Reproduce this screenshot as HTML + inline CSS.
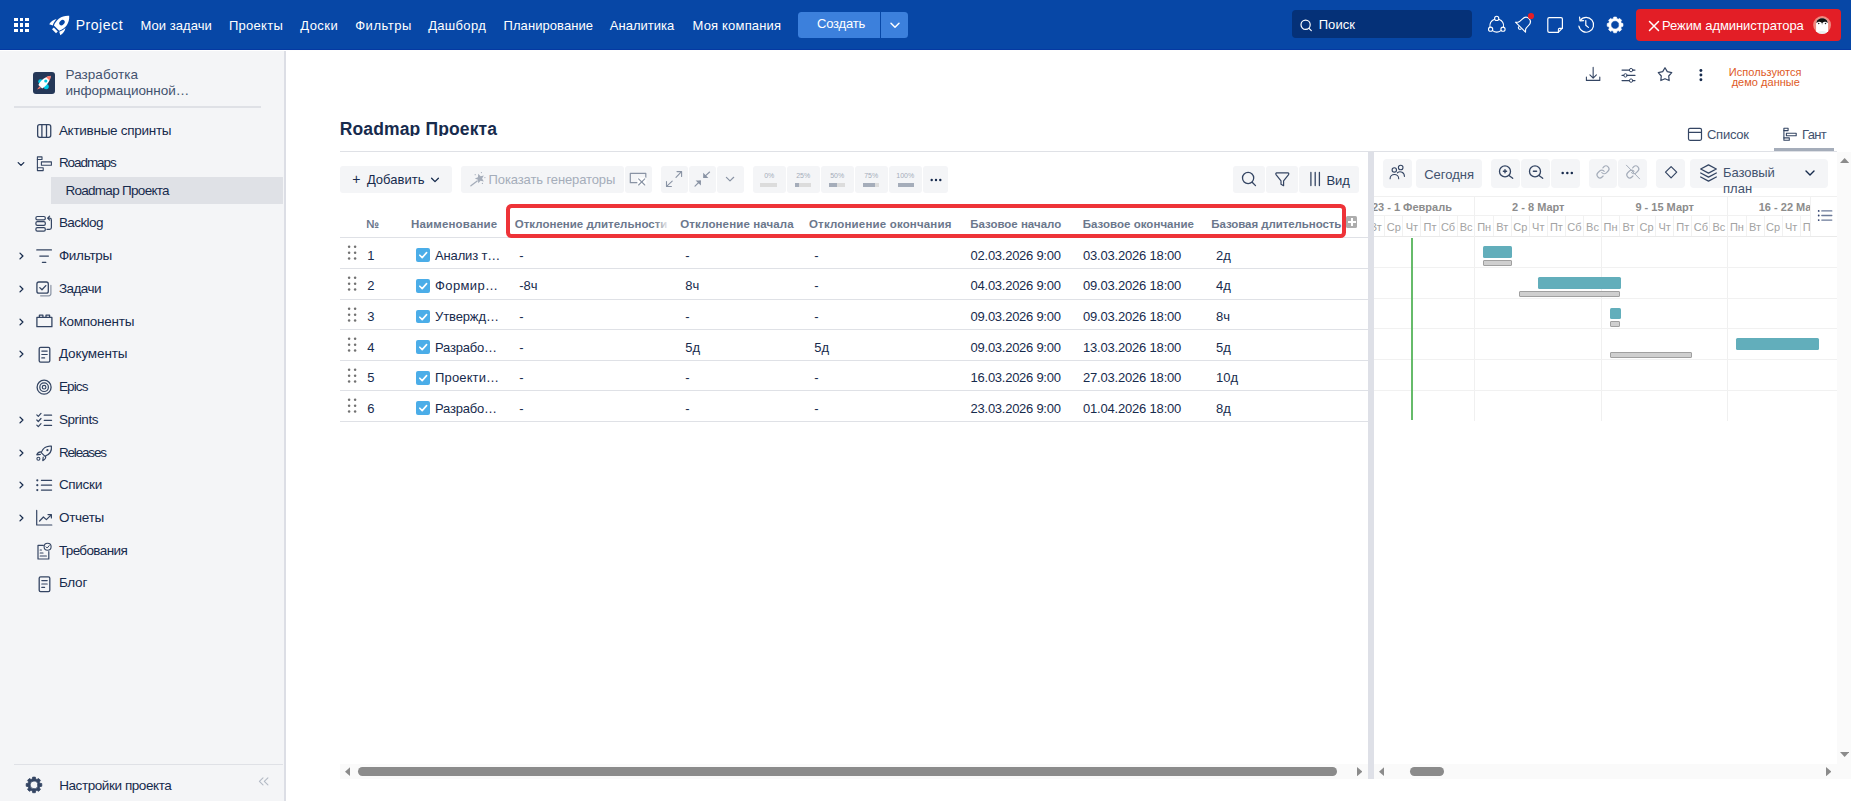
<!DOCTYPE html>
<html lang="ru"><head><meta charset="utf-8"><title>Roadmap Проекта</title>
<style>
html,body{margin:0;padding:0}
body{width:1851px;height:801px;position:relative;overflow:hidden;background:#fff;font-family:'Liberation Sans', sans-serif}
header,aside,section,main{display:block;position:static}
</style></head><body>
<header aria-label="Верхняя панель">
<div style="position:absolute;left:0px;top:0px;width:1851px;height:50px;background:#0747A6;"></div>
<div style="position:absolute;left:0px;top:49px;width:1851px;height:1px;background:#0539A2;"></div>
<div style="position:absolute;left:14px;top:17.8px;width:3.5px;height:3.5px;background:#fff;"></div>
<div style="position:absolute;left:19.5px;top:17.8px;width:3.5px;height:3.5px;background:#fff;"></div>
<div style="position:absolute;left:25px;top:17.8px;width:3.5px;height:3.5px;background:#fff;"></div>
<div style="position:absolute;left:14px;top:23.25px;width:3.5px;height:3.5px;background:#fff;"></div>
<div style="position:absolute;left:19.5px;top:23.25px;width:3.5px;height:3.5px;background:#fff;"></div>
<div style="position:absolute;left:25px;top:23.25px;width:3.5px;height:3.5px;background:#fff;"></div>
<div style="position:absolute;left:14px;top:28.7px;width:3.5px;height:3.5px;background:#fff;"></div>
<div style="position:absolute;left:19.5px;top:28.7px;width:3.5px;height:3.5px;background:#fff;"></div>
<div style="position:absolute;left:25px;top:28.7px;width:3.5px;height:3.5px;background:#fff;"></div>
<div style="position:absolute;left:797.9px;top:11.9px;width:82px;height:26.2px;background:#3C80DC;border-radius:3.5px 0 0 3.5px"></div>
<div style="position:absolute;left:881.1px;top:11.9px;width:27px;height:26.2px;background:#3C80DC;border-radius:0 3.5px 3.5px 0"></div>
<div style="position:absolute;left:1292.1px;top:10.3px;width:179.9px;height:28.2px;background:#053178;border-radius:4px"></div>
<div style="position:absolute;left:1636px;top:9px;width:205px;height:32px;background:#E31E26;border-radius:4px"></div>
<svg style="position:absolute;left:888px;top:19px;" width="14" height="12" viewBox="0 0 14 12" fill="none"><path d="M3 4.2 L7 8.2 L11 4.2" stroke="#fff" stroke-width="1.5" stroke-linecap="round" stroke-linejoin="round"/></svg>
<svg style="position:absolute;left:1299px;top:18px;" width="15" height="15" viewBox="0 0 15 15" fill="none"><circle cx="6.6" cy="6.8" r="4.6" stroke="#fff" stroke-width="1.2"/><path d="M10 10.3 L12.3 12.6" stroke="#fff" stroke-width="1.2" stroke-linecap="round"/></svg>
<svg style="position:absolute;left:1648px;top:20px;" width="12" height="12" viewBox="0 0 12 12" fill="none"><path d="M1.5 1.5 L10.5 10.5 M10.5 1.5 L1.5 10.5" stroke="#fff" stroke-width="1.5" stroke-linecap="round"/></svg>
<svg style="position:absolute;left:46px;top:12px;" width="27" height="27" viewBox="46 12 27 27" fill="none" stroke-linecap="round" stroke-linejoin="round">
<path d="M69.2 15.8 C62 15.2 56 19.5 53.9 25.6 L59.2 30.8 C65.5 28.6 69.8 23 69.2 15.8 Z" fill="#fff"/>
<ellipse cx="62" cy="22.6" rx="3.1" ry="2.2" transform="rotate(-45 62 22.6)" fill="#0747A6"/>
<path d="M49.2 24.3 C51 21.4 53.6 19.6 56.6 19 C54.8 20.8 53.6 22.9 52.8 25.4 Z" fill="#fff"/>
<path d="M60.4 35.2 C63.2 33.4 65 31 65.4 28 C63.6 29.8 61.6 31 59.2 31.8 Z" fill="#fff"/>
<path d="M52.9 28.3 L56.9 32.3" stroke="#fff" stroke-width="2.6" stroke-linecap="butt"/>
</svg>
<svg style="position:absolute;left:1486px;top:13px;" width="22" height="22" viewBox="1486 13 22 22" fill="none" stroke-linecap="round" stroke-linejoin="round">
<circle cx="1496.7" cy="18.4" r="2.1" stroke="#fff" stroke-width="1.1"/>
<circle cx="1490.6" cy="29.2" r="2.1" stroke="#fff" stroke-width="1.1"/>
<circle cx="1503" cy="29.2" r="2.1" stroke="#fff" stroke-width="1.1"/>
<path d="M1494.6 19.2 A7.3 7.3 0 0 0 1490 27" stroke="#fff" stroke-width="1.1"/>
<path d="M1498.8 19.2 A7.3 7.3 0 0 1 1503.5 27" stroke="#fff" stroke-width="1.1"/>
<path d="M1492.5 30.6 A7.3 7.3 0 0 0 1501 30.6" stroke="#fff" stroke-width="1.1"/>
</svg>
<svg style="position:absolute;left:1512px;top:10px;" width="25" height="26" viewBox="1512 10 25 26" fill="none" stroke-linecap="round" stroke-linejoin="round">
<g transform="translate(1520.5 27.2) rotate(45)">
<path d="M-7.1 0 L-5.2 -2 C-4.5 -3 -4.5 -5 -4.5 -7 C-4.5 -10.4 -2.5 -12.1 0 -12.1 C2.5 -12.1 4.5 -10.4 4.5 -7 C4.5 -5 4.5 -3 5.2 -2 L7.1 0 Z" stroke="#fff" stroke-width="1.1"/>
<path d="M-1.6 0.7 A1.6 1.6 0 0 0 1.6 0.7" stroke="#fff" stroke-width="1.1"/>
</g>
<circle cx="1531" cy="16" r="3.1" fill="#E31E26"/>
</svg>
<svg style="position:absolute;left:1545px;top:15px;" width="20" height="20" viewBox="1545 15 20 20" fill="none" stroke-linecap="round" stroke-linejoin="round">
<path d="M1549.2 17.6 H1561 Q1562.4 17.6 1562.4 19 V28.2 L1558.2 32.4 H1549.2 Q1547.8 32.4 1547.8 31 V19 Q1547.8 17.6 1549.2 17.6 Z" stroke="#fff" stroke-width="1.2"/>
<path d="M1562.2 28.4 H1559.4 Q1558.4 28.4 1558.4 29.4 V32.2" stroke="#fff" stroke-width="1.1"/>
</svg>
<svg style="position:absolute;left:1575px;top:14px;" width="22" height="22" viewBox="1575 14 22 22" fill="none" stroke-linecap="round" stroke-linejoin="round">
<path d="M1580.3 20.3 A7.4 7.4 0 1 1 1578.9 26.2" stroke="#fff" stroke-width="1.2"/>
<path d="M1579.6 17.2 L1580 20.8 L1583.6 20.6" stroke="#fff" stroke-width="1.2"/>
<path d="M1585.8 20.6 V25.2 L1588.4 27.4" stroke="#fff" stroke-width="1.2"/>
</svg>
<svg style="position:absolute;left:1604px;top:14px;" width="22" height="22" viewBox="1604 14 22 22" fill="none" stroke-linecap="round" stroke-linejoin="round"><path d="M1621.33 23.04 L1622.99 23.56 L1622.99 26.24 L1621.33 26.76 L1620.82 27.99 L1621.62 29.53 L1619.73 31.42 L1618.19 30.62 L1616.96 31.13 L1616.44 32.79 L1613.76 32.79 L1613.24 31.13 L1612.01 30.62 L1610.47 31.42 L1608.58 29.53 L1609.38 27.99 L1608.87 26.76 L1607.21 26.24 L1607.21 23.56 L1608.87 23.04 L1609.38 21.81 L1608.58 20.27 L1610.47 18.38 L1612.01 19.18 L1613.24 18.67 L1613.76 17.01 L1616.44 17.01 L1616.96 18.67 L1618.19 19.18 L1619.73 18.38 L1621.62 20.27 L1620.82 21.81 Z M1619.30 24.90 A4.2 4.2 0 1 0 1610.90 24.90 A4.2 4.2 0 1 0 1619.30 24.90 Z" fill="#fff" fill-rule="evenodd" stroke="#fff" stroke-width="0.6"/></svg>
<svg style="position:absolute;left:1811px;top:14px;" width="22" height="22" viewBox="1811 14 22 22" fill="none" stroke-linecap="round" stroke-linejoin="round">
<circle cx="1822.1" cy="25" r="8.9" fill="#EF8A80"/>
<clipPath id="av"><circle cx="1822.1" cy="25" r="8.7"/></clipPath>
<g clip-path="url(#av)">
<path d="M1816.1 35 V24.5 C1816.1 20.2 1818.6 18.3 1822.1 18.3 C1825.6 18.3 1828.1 20.2 1828.1 24.5 V35 Z" fill="#fff"/>
<path d="M1816.3 23.2 C1816.8 19.6 1819 18.2 1822.1 18.2 C1825.2 18.2 1827.4 19.6 1827.9 23.2 C1826.4 21.4 1824.2 21.2 1822.8 22.4 L1822.1 23.8 L1821.4 22.4 C1820 21.2 1817.8 21.4 1816.3 23.2 Z" fill="#111"/>
<circle cx="1818.7" cy="23.6" r="0.75" fill="#222"/><circle cx="1825.5" cy="23.6" r="0.75" fill="#222"/>
<path d="M1821.6 23.4 H1822.6 L1822.1 25 Z" fill="#999"/>
<ellipse cx="1822.1" cy="33.2" rx="5.4" ry="2.2" fill="#E8F0EF"/>
</g>
</svg>
<span style="position:absolute;left:75.66px;top:15px;font:400 14px/20px 'Liberation Sans', sans-serif;color:#fff;white-space:pre;letter-spacing:0.553px;">Project</span>
<span style="position:absolute;left:140.52px;top:16px;font:400 13px/19px 'Liberation Sans', sans-serif;color:#fff;white-space:pre;letter-spacing:0.042px;">Мои задачи</span>
<span style="position:absolute;left:228.92px;top:16px;font:400 13px/19px 'Liberation Sans', sans-serif;color:#fff;white-space:pre;letter-spacing:0.284px;">Проекты</span>
<span style="position:absolute;left:300.22px;top:16px;font:400 13px/19px 'Liberation Sans', sans-serif;color:#fff;white-space:pre;letter-spacing:0.484px;">Доски</span>
<span style="position:absolute;left:355.22px;top:16px;font:400 13px/19px 'Liberation Sans', sans-serif;color:#fff;white-space:pre;letter-spacing:0.506px;">Фильтры</span>
<span style="position:absolute;left:428.22px;top:16px;font:400 13px/19px 'Liberation Sans', sans-serif;color:#fff;white-space:pre;letter-spacing:0.311px;">Дашборд</span>
<span style="position:absolute;left:503.52px;top:16px;font:400 13px/19px 'Liberation Sans', sans-serif;color:#fff;white-space:pre;letter-spacing:0.069px;">Планирование</span>
<span style="position:absolute;left:609.82px;top:16px;font:400 13px/19px 'Liberation Sans', sans-serif;color:#fff;white-space:pre;letter-spacing:0.012px;">Аналитика</span>
<span style="position:absolute;left:692.52px;top:16px;font:400 13px/19px 'Liberation Sans', sans-serif;color:#fff;white-space:pre;letter-spacing:0.179px;">Моя компания</span>
<span style="position:absolute;left:816.92px;top:14px;font:400 13px/19px 'Liberation Sans', sans-serif;color:#fff;white-space:pre;letter-spacing:-0.155px;">Создать</span>
<span style="position:absolute;left:1318.72px;top:15px;font:400 13px/19px 'Liberation Sans', sans-serif;color:#fff;white-space:pre;letter-spacing:0.046px;">Поиск</span>
<span style="position:absolute;left:1662.02px;top:16px;font:400 13px/19px 'Liberation Sans', sans-serif;color:#fff;white-space:pre;letter-spacing:-0.076px;">Режим администратора</span>
</header>
<aside aria-label="Меню проекта">
<div style="position:absolute;left:0px;top:51px;width:284px;height:750px;background:#F4F5F7;"></div>
<div style="position:absolute;left:284px;top:51px;width:2px;height:750px;background:#DCDEE5;"></div>
<div style="position:absolute;left:33px;top:72px;width:21.5px;height:21.5px;background:#253858;border-radius:3px"></div>
<div style="position:absolute;left:14px;top:106px;width:247px;height:2px;background:#DFE1E6;"></div>
<div style="position:absolute;left:51px;top:177.3px;width:232px;height:26.5px;background:#DFE1E6;"></div>
<div style="position:absolute;left:14px;top:764px;width:269px;height:1px;background:#DFE1E6;"></div>
<svg style="position:absolute;left:15.3px;top:157.6px;" width="12" height="12" viewBox="0 0 12 12" fill="none"><path d="M3.2 4.6 L6 7.4 L8.8 4.6" stroke="#172B4D" stroke-width="1.3" stroke-linecap="round" stroke-linejoin="round"/></svg>
<svg style="position:absolute;left:15.5px;top:250.2px;" width="12" height="12" viewBox="0 0 12 12" fill="none"><path d="M4 3.1 L6.9 6 L4 8.9" stroke="#172B4D" stroke-width="1.3" stroke-linecap="round" stroke-linejoin="round"/></svg>
<svg style="position:absolute;left:15.5px;top:283.2px;" width="12" height="12" viewBox="0 0 12 12" fill="none"><path d="M4 3.1 L6.9 6 L4 8.9" stroke="#172B4D" stroke-width="1.3" stroke-linecap="round" stroke-linejoin="round"/></svg>
<svg style="position:absolute;left:15.5px;top:316.2px;" width="12" height="12" viewBox="0 0 12 12" fill="none"><path d="M4 3.1 L6.9 6 L4 8.9" stroke="#172B4D" stroke-width="1.3" stroke-linecap="round" stroke-linejoin="round"/></svg>
<svg style="position:absolute;left:15.5px;top:348.2px;" width="12" height="12" viewBox="0 0 12 12" fill="none"><path d="M4 3.1 L6.9 6 L4 8.9" stroke="#172B4D" stroke-width="1.3" stroke-linecap="round" stroke-linejoin="round"/></svg>
<svg style="position:absolute;left:15.5px;top:414.2px;" width="12" height="12" viewBox="0 0 12 12" fill="none"><path d="M4 3.1 L6.9 6 L4 8.9" stroke="#172B4D" stroke-width="1.3" stroke-linecap="round" stroke-linejoin="round"/></svg>
<svg style="position:absolute;left:15.5px;top:447.2px;" width="12" height="12" viewBox="0 0 12 12" fill="none"><path d="M4 3.1 L6.9 6 L4 8.9" stroke="#172B4D" stroke-width="1.3" stroke-linecap="round" stroke-linejoin="round"/></svg>
<svg style="position:absolute;left:15.5px;top:479.2px;" width="12" height="12" viewBox="0 0 12 12" fill="none"><path d="M4 3.1 L6.9 6 L4 8.9" stroke="#172B4D" stroke-width="1.3" stroke-linecap="round" stroke-linejoin="round"/></svg>
<svg style="position:absolute;left:15.5px;top:512.2px;" width="12" height="12" viewBox="0 0 12 12" fill="none"><path d="M4 3.1 L6.9 6 L4 8.9" stroke="#172B4D" stroke-width="1.3" stroke-linecap="round" stroke-linejoin="round"/></svg>
<svg style="position:absolute;left:257px;top:776px;" width="13" height="11" viewBox="0 0 13 11" fill="none"><path d="M6 1.9 L2.4 5.4 L6 8.9 M10.9 1.9 L7.3 5.4 L10.9 8.9" stroke="#B3BAC5" stroke-width="1.1" stroke-linecap="round" stroke-linejoin="round"/></svg>
<svg style="position:absolute;left:31px;top:70px;" width="25.4" height="25.400000000000006" viewBox="31 70 25.4 25.400000000000006" fill="none" stroke-linecap="round" stroke-linejoin="round">
<circle cx="40.6" cy="81.6" r="2.4" fill="#00C7E6"/><circle cx="46.2" cy="86.6" r="2.6" fill="#00C7E6"/>
<path d="M38.4 85 C41 79.6 45.4 76.6 50.6 76 C50 81.2 47 85.6 42.2 88.4 Z" fill="#fff"/>
<path d="M50.8 75.8 C49 76 47.4 76.4 46.2 77.2 L49.6 80.6 C50.4 79.2 50.8 77.6 50.8 75.8 Z" fill="#FF7A6B"/>
<circle cx="45.8" cy="81" r="1.6" fill="#00C7E6"/>
<path d="M39.6 86.2 L37 89.6 L41 88 Z" fill="#FF7A6B"/>
</svg>
<svg style="position:absolute;left:35px;top:122px;" width="18.4" height="18" viewBox="35 122 18.4 18" fill="none" stroke-linecap="round" stroke-linejoin="round"><rect x="37.65" y="124.65" width="13.1" height="12.7" rx="2" stroke="#344563" stroke-width="1.3"/><path d="M41.9 125 V137 M46.5 125 V137" stroke="#344563" stroke-width="1.3" /></svg>
<svg style="position:absolute;left:34px;top:154px;" width="20" height="19" viewBox="34 154 20 19" fill="none" stroke-linecap="round" stroke-linejoin="round"><rect x="37.4" y="156.9" width="4.6" height="2.6" stroke="#344563" stroke-width="1.1"/><rect x="41.4" y="161.9" width="10" height="3.4" stroke="#344563" stroke-width="1.1"/><rect x="37.4" y="167.8" width="5.8" height="2.8" stroke="#344563" stroke-width="1.1"/><path d="M37.4 159.5 V167.8" stroke="#344563" stroke-width="1.1" /></svg>
<svg style="position:absolute;left:33px;top:213px;" width="21" height="21" viewBox="33 213 21 21" fill="none" stroke-linecap="round" stroke-linejoin="round"><rect x="35.9" y="216.5" width="9.4" height="3.3" rx="1.4" stroke="#344563" stroke-width="1.2"/><rect x="35.9" y="221.6" width="9.4" height="3.8" rx="1.4" stroke="#344563" stroke-width="1.2"/><rect x="35.9" y="227.6" width="9.4" height="3.5" rx="1.4" stroke="#344563" stroke-width="1.2"/><path d="M47 229.4 H49.6 Q51.4 229.4 51.4 227.6 V220 Q51.4 218.2 49.6 218.2 H47.8 M49.6 216.2 L47.6 218.2 L49.6 220.2" stroke="#344563" stroke-width="1.2" /></svg>
<svg style="position:absolute;left:34px;top:247px;" width="20" height="18" viewBox="34 247 20 18" fill="none" stroke-linecap="round" stroke-linejoin="round"><path d="M36.8 249.9 H51.4 M39.8 256.1 H48.4 M42.4 262.3 H45.8" stroke="#344563" stroke-width="1.3" /></svg>
<svg style="position:absolute;left:34px;top:279px;" width="20" height="20" viewBox="34 279 20 20" fill="none" stroke-linecap="round" stroke-linejoin="round"><rect x="36.9" y="282" width="11.4" height="11.2" rx="2" stroke="#344563" stroke-width="1.3"/><path d="M39.8 287.6 L42 289.8 L45.8 285.6" stroke="#344563" stroke-width="1.3" /><path d="M50.9 285.4 V293.6 Q50.9 295.8 48.7 295.8 H40.6" stroke="#8993A4" stroke-width="1.2" /></svg>
<svg style="position:absolute;left:34px;top:312px;" width="21" height="18" viewBox="34 312 21 18" fill="none" stroke-linecap="round" stroke-linejoin="round"><path d="M36.9 317.4 H51.9 V326.7 H36.9 Z M39.4 317.2 V315.2 H42.9 V317.2 M46 317.2 V315.2 H49.6 V317.2" stroke="#344563" stroke-width="1.3" /></svg>
<svg style="position:absolute;left:36px;top:344px;" width="17" height="21" viewBox="36 344 17 21" fill="none" stroke-linecap="round" stroke-linejoin="round"><rect x="39.2" y="347.3" width="10.6" height="14.8" rx="1.4" stroke="#344563" stroke-width="1.3"/><path d="M41.800000000000004 351.1 H47.2 M41.800000000000004 354.5 H47.2 M41.800000000000004 357.90000000000003 H44.6" stroke="#344563" stroke-width="1.2" /></svg>
<svg style="position:absolute;left:34px;top:377px;" width="20" height="20" viewBox="34 377 20 20" fill="none" stroke-linecap="round" stroke-linejoin="round"><circle cx="44.1" cy="387.2" r="7" stroke="#344563" stroke-width="1.3"/><circle cx="44.1" cy="387.2" r="4.3" stroke="#344563" stroke-width="1.2"/><circle cx="44.1" cy="387.2" r="1.8" stroke="#344563" stroke-width="1.2"/></svg>
<svg style="position:absolute;left:34px;top:410px;" width="20" height="19" viewBox="34 410 20 19" fill="none" stroke-linecap="round" stroke-linejoin="round"><path d="M36.8 414.9 L38.3 416.4 L41 413.4 M36.8 420 L38.3 421.5 L41 418.5 M36.8 425.1 L38.3 426.6 L41 423.6 M44.2 415.2 H51.6 M44.2 420.3 H51.6 M44.2 425.4 H51.6" stroke="#344563" stroke-width="1.2" /></svg>
<svg style="position:absolute;left:33px;top:443px;" width="22" height="20" viewBox="33 443 22 20" fill="none" stroke-linecap="round" stroke-linejoin="round"><path d="M51.4 446.2 C46.6 445.6 42.6 448.4 41.2 452.6 L44.8 456.2 C49.2 454.8 52 451 51.4 446.2 Z M41.4 452 C39.6 451.6 37.8 452.6 36.8 454.8 L40.4 454.4 M45.6 456 C46 457.8 45 459.6 42.8 460.6 L43.2 457.2" stroke="#344563" stroke-width="1.2" /><circle cx="47.4" cy="450.2" r="1.1" fill="#344563"/><circle cx="38.4" cy="458.8" r="1.5" stroke="#344563" stroke-width="1.1"/></svg>
<svg style="position:absolute;left:34px;top:477px;" width="20" height="16" viewBox="34 477 20 16" fill="none" stroke-linecap="round" stroke-linejoin="round"><path d="M41.4 480.3 H51.6 M41.4 485.2 H51.6 M41.4 490.1 H51.6" stroke="#344563" stroke-width="1.2" /><circle cx="37.3" cy="480.3" r="1.1" fill="#344563"/><circle cx="37.3" cy="485.2" r="1.1" fill="#344563"/><circle cx="37.3" cy="490.1" r="1.1" fill="#344563"/></svg>
<svg style="position:absolute;left:34px;top:508px;" width="20" height="20" viewBox="34 508 20 20" fill="none" stroke-linecap="round" stroke-linejoin="round"><path d="M36.7 510.4 V525 H51.8 M39.6 521 L43.4 517 L46.4 519.6 L51.2 514.8 M48 514.6 H51.4 V518" stroke="#344563" stroke-width="1.2" /></svg>
<svg style="position:absolute;left:35px;top:541px;" width="19" height="21" viewBox="35 541 19 21" fill="none" stroke-linecap="round" stroke-linejoin="round"><path d="M43.4 545.3 H38 V559 H48.8 V551.6 M40.2 550 H41.4 M40.2 553 H43 M40.2 556 H46.4" stroke="#344563" stroke-width="1.2" /><circle cx="47.6" cy="546.7" r="3.5" stroke="#344563" stroke-width="1.1"/><path d="M46 546.8 L47.2 548 L49.2 545.6" stroke="#344563" stroke-width="1" /></svg>
<svg style="position:absolute;left:36px;top:574px;" width="17" height="20" viewBox="36 574 17 20" fill="none" stroke-linecap="round" stroke-linejoin="round"><rect x="39.2" y="576.8" width="10.6" height="14.8" rx="1.4" stroke="#344563" stroke-width="1.3"/><path d="M41.800000000000004 580.5999999999999 H47.2 M41.800000000000004 584.0 H47.2 M41.800000000000004 587.4 H44.6" stroke="#344563" stroke-width="1.2" /></svg>
<svg style="position:absolute;left:24px;top:775px;" width="20" height="20" viewBox="24 775 20 20" fill="none" stroke-linecap="round" stroke-linejoin="round"><path d="M39.84 783.15 L41.79 783.58 L41.79 786.22 L39.84 786.65 L39.37 787.80 L40.44 789.47 L38.57 791.34 L36.90 790.27 L35.75 790.74 L35.32 792.69 L32.68 792.69 L32.25 790.74 L31.10 790.27 L29.43 791.34 L27.56 789.47 L28.63 787.80 L28.16 786.65 L26.21 786.22 L26.21 783.58 L28.16 783.15 L28.63 782.00 L27.56 780.33 L29.43 778.46 L31.10 779.53 L32.25 779.06 L32.68 777.11 L35.32 777.11 L35.75 779.06 L36.90 779.53 L38.57 778.46 L40.44 780.33 L39.37 782.00 Z M37.90 784.90 A3.9 3.9 0 1 0 30.10 784.90 A3.9 3.9 0 1 0 37.90 784.90 Z" fill="#344563" fill-rule="evenodd" stroke="#344563" stroke-width="0.8"/></svg>
<span style="position:absolute;left:65.59px;top:65px;font:400 13.5px/19px 'Liberation Sans', sans-serif;color:#42526E;white-space:pre;letter-spacing:0.045px;">Разработка</span>
<span style="position:absolute;left:65.59px;top:81px;font:400 13.5px/19px 'Liberation Sans', sans-serif;color:#42526E;white-space:pre;letter-spacing:-0.042px;">информационной…</span>
<span style="position:absolute;left:58.89px;top:121px;font:400 13.5px/19px 'Liberation Sans', sans-serif;color:#172B4D;white-space:pre;letter-spacing:-0.276px;">Активные спринты</span>
<span style="position:absolute;left:58.89px;top:153px;font:400 13.5px/19px 'Liberation Sans', sans-serif;color:#172B4D;white-space:pre;letter-spacing:-1.055px;">Roadmaps</span>
<span style="position:absolute;left:58.89px;top:213px;font:400 13.5px/19px 'Liberation Sans', sans-serif;color:#172B4D;white-space:pre;letter-spacing:-0.576px;">Backlog</span>
<span style="position:absolute;left:58.89px;top:246px;font:400 13.5px/19px 'Liberation Sans', sans-serif;color:#172B4D;white-space:pre;letter-spacing:-0.278px;">Фильтры</span>
<span style="position:absolute;left:58.89px;top:279px;font:400 13.5px/19px 'Liberation Sans', sans-serif;color:#172B4D;white-space:pre;letter-spacing:-0.535px;">Задачи</span>
<span style="position:absolute;left:58.89px;top:312px;font:400 13.5px/19px 'Liberation Sans', sans-serif;color:#172B4D;white-space:pre;letter-spacing:-0.246px;">Компоненты</span>
<span style="position:absolute;left:58.89px;top:344px;font:400 13.5px/19px 'Liberation Sans', sans-serif;color:#172B4D;white-space:pre;letter-spacing:-0.119px;">Документы</span>
<span style="position:absolute;left:58.89px;top:377px;font:400 13.5px/19px 'Liberation Sans', sans-serif;color:#172B4D;white-space:pre;letter-spacing:-0.841px;">Epics</span>
<span style="position:absolute;left:58.89px;top:410px;font:400 13.5px/19px 'Liberation Sans', sans-serif;color:#172B4D;white-space:pre;letter-spacing:-0.387px;">Sprints</span>
<span style="position:absolute;left:58.89px;top:443px;font:400 13.5px/19px 'Liberation Sans', sans-serif;color:#172B4D;white-space:pre;letter-spacing:-1.160px;">Releases</span>
<span style="position:absolute;left:58.89px;top:475px;font:400 13.5px/19px 'Liberation Sans', sans-serif;color:#172B4D;white-space:pre;letter-spacing:-0.299px;">Списки</span>
<span style="position:absolute;left:58.89px;top:508px;font:400 13.5px/19px 'Liberation Sans', sans-serif;color:#172B4D;white-space:pre;letter-spacing:-0.247px;">Отчеты</span>
<span style="position:absolute;left:58.89px;top:541px;font:400 13.5px/19px 'Liberation Sans', sans-serif;color:#172B4D;white-space:pre;letter-spacing:-0.622px;">Требования</span>
<span style="position:absolute;left:58.89px;top:573px;font:400 13.5px/19px 'Liberation Sans', sans-serif;color:#172B4D;white-space:pre;letter-spacing:-0.245px;">Блог</span>
<span style="position:absolute;left:65.39px;top:181px;font:400 13.5px/19px 'Liberation Sans', sans-serif;color:#172B4D;white-space:pre;letter-spacing:-0.705px;">Roadmap Проекта</span>
<span style="position:absolute;left:59.19px;top:776px;font:400 13.5px/19px 'Liberation Sans', sans-serif;color:#172B4D;white-space:pre;letter-spacing:-0.424px;">Настройки проекта</span>
</aside>
<section aria-label="Заголовок страницы">
<div style="position:absolute;left:330px;top:135.6px;width:200px;height:8px;background:#fff;z-index:5"></div>
<div style="position:absolute;left:340px;top:151px;width:1497px;height:1px;background:#DFE1E6;"></div>
<div style="position:absolute;left:1774px;top:148px;width:60px;height:3.2px;background:#A5ADBA;"></div>
<svg style="position:absolute;left:1584px;top:65px;" width="18" height="18" viewBox="1584 65 18 18" fill="none" stroke-linecap="round" stroke-linejoin="round"><path d="M1593.15 67.4 V78 M1589.9 74.9 L1593.15 78.1 L1596.4 74.9 M1586.4 77 V80.4 H1599.8 V77" stroke="#344563" stroke-width="1.1" /></svg>
<svg style="position:absolute;left:1619px;top:66px;" width="19" height="18" viewBox="1619 66 19 18" fill="none" stroke-linecap="round" stroke-linejoin="round"><path d="M1622 70.1 H1629.4 M1632.8 70.1 H1635 M1622 75.4 H1623.8 M1627.2 75.4 H1635 M1622 80.6 H1629.4 M1632.8 80.6 H1635" stroke="#344563" stroke-width="1.1" /><circle cx="1631.1" cy="70.1" r="1.7" stroke="#344563" stroke-width="1"/><circle cx="1625.5" cy="75.4" r="1.7" stroke="#344563" stroke-width="1"/><circle cx="1631.1" cy="80.6" r="1.7" stroke="#344563" stroke-width="1"/></svg>
<svg style="position:absolute;left:1655px;top:64px;" width="20" height="20" viewBox="1655 64 20 20" fill="none" stroke-linecap="round" stroke-linejoin="round"><path d="M1665.00 67.70 L1667.29 71.64 L1671.75 72.61 L1668.71 76.01 L1669.17 80.54 L1665.00 78.70 L1660.83 80.54 L1661.29 76.01 L1658.25 72.61 L1662.71 71.64 Z" stroke="#344563" stroke-width="1.2" /></svg>
<svg style="position:absolute;left:1696px;top:67px;" width="10" height="17" viewBox="1696 67 10 17" fill="none" stroke-linecap="round" stroke-linejoin="round"><circle cx="1700.9" cy="70.5" r="1.45" fill="#172B4D"/><circle cx="1700.9" cy="75" r="1.45" fill="#172B4D"/><circle cx="1700.9" cy="79.7" r="1.45" fill="#172B4D"/></svg>
<svg style="position:absolute;left:1686px;top:125px;" width="18" height="18" viewBox="1686 125 18 18" fill="none" stroke-linecap="round" stroke-linejoin="round"><rect x="1688.5" y="128.3" width="13" height="12" rx="1.5" stroke="#344563" stroke-width="1.2"/><path d="M1688.6 132.4 H1701.4" stroke="#344563" stroke-width="1.2" /></svg>
<svg style="position:absolute;left:1781px;top:125px;" width="18" height="18" viewBox="1781 125 18 18" fill="none" stroke-linecap="round" stroke-linejoin="round"><rect x="1783.9" y="128.2" width="4.2" height="2.4" stroke="#344563" stroke-width="1.1"/><rect x="1786.4" y="133.2" width="9.8" height="2.6" stroke="#344563" stroke-width="1.1"/><rect x="1783.9" y="137.9" width="5.4" height="2.4" stroke="#344563" stroke-width="1.1"/><path d="M1783.9 130.6 V137.9" stroke="#344563" stroke-width="1.1" /></svg>
<span style="position:absolute;left:1728.84px;top:64px;font:400 11px/16px 'Liberation Sans', sans-serif;color:#DE5A26;white-space:pre;letter-spacing:0.047px;">Используются</span>
<span style="position:absolute;left:1731.64px;top:74px;font:400 11px/16px 'Liberation Sans', sans-serif;color:#DE5A26;white-space:pre;letter-spacing:0.031px;">демо данные</span>
<span style="position:absolute;left:339.65px;top:116px;font:700 17.5px/24px 'Liberation Sans', sans-serif;color:#172B4D;white-space:pre;letter-spacing:0.149px;transform:translateY(0.5px);">Roadmap Проекта</span>
<span style="position:absolute;left:1706.92px;top:125px;font:400 13px/19px 'Liberation Sans', sans-serif;color:#42526E;white-space:pre;letter-spacing:-0.221px;">Список</span>
<span style="position:absolute;left:1802.12px;top:125px;font:400 13px/19px 'Liberation Sans', sans-serif;color:#42526E;white-space:pre;letter-spacing:-0.724px;">Гант</span>
</section>
<section aria-label="Таблица задач">
<div style="position:absolute;left:340px;top:166.2px;width:111.8px;height:26.6px;background:#F4F5F7;border-radius:3px"></div>
<div style="position:absolute;left:461.2px;top:166.2px;width:162.5px;height:26.6px;background:#F4F5F7;border-radius:3px"></div>
<div style="position:absolute;left:625.4px;top:166.2px;width:26.5px;height:26.6px;background:#F4F5F7;border-radius:3px"></div>
<div style="position:absolute;left:661.1px;top:166.2px;width:26.5px;height:26.6px;background:#F4F5F7;border-radius:3px"></div>
<div style="position:absolute;left:689.2px;top:166.2px;width:26.6px;height:26.6px;background:#F4F5F7;border-radius:3px"></div>
<div style="position:absolute;left:717.1px;top:166.2px;width:26.8px;height:26.6px;background:#F4F5F7;border-radius:3px"></div>
<div style="position:absolute;left:753.2px;top:166.2px;width:32.6px;height:26.6px;background:#F4F5F7;border-radius:3px"></div>
<div style="position:absolute;left:760.2px;top:183.3px;width:16.4px;height:3.6px;background:#DCDCDC;"></div>
<div style="position:absolute;left:787.2px;top:166.2px;width:32.6px;height:26.6px;background:#F4F5F7;border-radius:3px"></div>
<div style="position:absolute;left:795.1px;top:183.3px;width:16.4px;height:3.6px;background:#DCDCDC;"></div>
<div style="position:absolute;left:795.1px;top:183.3px;width:4.1px;height:3.6px;background:#A5ADBA;"></div>
<div style="position:absolute;left:821.2px;top:166.2px;width:32.6px;height:26.6px;background:#F4F5F7;border-radius:3px"></div>
<div style="position:absolute;left:829.1px;top:183.3px;width:16.4px;height:3.6px;background:#DCDCDC;"></div>
<div style="position:absolute;left:829.1px;top:183.3px;width:8.2px;height:3.6px;background:#A5ADBA;"></div>
<div style="position:absolute;left:855.2px;top:166.2px;width:32.6px;height:26.6px;background:#F4F5F7;border-radius:3px"></div>
<div style="position:absolute;left:863px;top:183.3px;width:16.4px;height:3.6px;background:#DCDCDC;"></div>
<div style="position:absolute;left:863px;top:183.3px;width:12.3px;height:3.6px;background:#A5ADBA;"></div>
<div style="position:absolute;left:889.2px;top:166.2px;width:32.6px;height:26.6px;background:#F4F5F7;border-radius:3px"></div>
<div style="position:absolute;left:898px;top:183.3px;width:16.4px;height:3.6px;background:#DCDCDC;"></div>
<div style="position:absolute;left:898px;top:183.3px;width:16.4px;height:3.6px;background:#A5ADBA;"></div>
<div style="position:absolute;left:923px;top:166.2px;width:24.9px;height:26.6px;background:#F4F5F7;border-radius:3px"></div>
<div style="position:absolute;left:1233.3px;top:166.2px;width:31.5px;height:26.6px;background:#F4F5F7;border-radius:3px"></div>
<div style="position:absolute;left:1266.2px;top:166.2px;width:31.5px;height:26.6px;background:#F4F5F7;border-radius:3px"></div>
<div style="position:absolute;left:1299px;top:166.2px;width:60.1px;height:26.6px;background:#F4F5F7;border-radius:3px"></div>
<div style="position:absolute;left:340px;top:237.2px;width:1028px;height:1px;background:#DFE1E6;"></div>
<div style="position:absolute;left:340px;top:267.85px;width:1028px;height:1px;background:#DFE1E6;"></div>
<div style="position:absolute;left:340px;top:298.5px;width:1028px;height:1px;background:#DFE1E6;"></div>
<div style="position:absolute;left:340px;top:329.15px;width:1028px;height:1px;background:#DFE1E6;"></div>
<div style="position:absolute;left:340px;top:359.8px;width:1028px;height:1px;background:#DFE1E6;"></div>
<div style="position:absolute;left:340px;top:390.45px;width:1028px;height:1px;background:#DFE1E6;"></div>
<div style="position:absolute;left:340px;top:421.1px;width:1028px;height:1px;background:#DFE1E6;"></div>
<div style="position:absolute;left:416px;top:248.2px;width:14.3px;height:13.8px;background:#4BADE8;border-radius:2px"></div>
<div style="position:absolute;left:416px;top:278.85px;width:14.3px;height:13.8px;background:#4BADE8;border-radius:2px"></div>
<div style="position:absolute;left:416px;top:309.5px;width:14.3px;height:13.8px;background:#4BADE8;border-radius:2px"></div>
<div style="position:absolute;left:416px;top:340.15px;width:14.3px;height:13.8px;background:#4BADE8;border-radius:2px"></div>
<div style="position:absolute;left:416px;top:370.8px;width:14.3px;height:13.8px;background:#4BADE8;border-radius:2px"></div>
<div style="position:absolute;left:416px;top:401.45px;width:14.3px;height:13.8px;background:#4BADE8;border-radius:2px"></div>
<div style="position:absolute;left:505.5px;top:204.4px;width:840.1px;height:34px;background:transparent;border:4px solid #EE3338;border-radius:5.5px;box-sizing:border-box;z-index:6"></div>
<div style="position:absolute;left:655px;top:215px;width:18px;height:18px;background:linear-gradient(90deg,rgba(255,255,255,0),#fff 80%);z-index:4"></div>
<div style="position:absolute;left:1345.9px;top:216.2px;width:11.4px;height:11.7px;background:#ADADAD;border-radius:1.5px"></div>
<div style="position:absolute;left:1347.6px;top:221px;width:8px;height:2.1px;background:#fff;"></div>
<div style="position:absolute;left:1350.55px;top:218px;width:2.1px;height:8.1px;background:#fff;"></div>
<svg style="position:absolute;left:429.3px;top:173.5px;" width="12" height="12" viewBox="0 0 12 12" fill="none"><path d="M2.6 4.2 L6 7.6 L9.4 4.2" stroke="#172B4D" stroke-width="1.3" stroke-linecap="round" stroke-linejoin="round"/></svg>
<svg style="position:absolute;left:416px;top:248.2px;" width="14.3" height="13.8" viewBox="0 0 14.3 13.8" fill="none"><path d="M3.8 7.2 L6.2 9.6 L10.6 4.6" stroke="#fff" stroke-width="1.6" stroke-linecap="round" stroke-linejoin="round"/></svg>
<svg style="position:absolute;left:346px;top:245.2px;" width="12" height="16" viewBox="0 0 12 16" fill="none"><circle cx="3.1" cy="1.8" r="1.25" fill="#727272"/><circle cx="3.1" cy="7.7" r="1.25" fill="#727272"/><circle cx="3.1" cy="13.600000000000001" r="1.25" fill="#727272"/><circle cx="9.1" cy="1.8" r="1.25" fill="#727272"/><circle cx="9.1" cy="7.7" r="1.25" fill="#727272"/><circle cx="9.1" cy="13.600000000000001" r="1.25" fill="#727272"/></svg>
<svg style="position:absolute;left:416px;top:278.85px;" width="14.3" height="13.8" viewBox="0 0 14.3 13.8" fill="none"><path d="M3.8 7.2 L6.2 9.6 L10.6 4.6" stroke="#fff" stroke-width="1.6" stroke-linecap="round" stroke-linejoin="round"/></svg>
<svg style="position:absolute;left:346px;top:275.85px;" width="12" height="16" viewBox="0 0 12 16" fill="none"><circle cx="3.1" cy="1.8" r="1.25" fill="#727272"/><circle cx="3.1" cy="7.7" r="1.25" fill="#727272"/><circle cx="3.1" cy="13.600000000000001" r="1.25" fill="#727272"/><circle cx="9.1" cy="1.8" r="1.25" fill="#727272"/><circle cx="9.1" cy="7.7" r="1.25" fill="#727272"/><circle cx="9.1" cy="13.600000000000001" r="1.25" fill="#727272"/></svg>
<svg style="position:absolute;left:416px;top:309.5px;" width="14.3" height="13.8" viewBox="0 0 14.3 13.8" fill="none"><path d="M3.8 7.2 L6.2 9.6 L10.6 4.6" stroke="#fff" stroke-width="1.6" stroke-linecap="round" stroke-linejoin="round"/></svg>
<svg style="position:absolute;left:346px;top:306.5px;" width="12" height="16" viewBox="0 0 12 16" fill="none"><circle cx="3.1" cy="1.8" r="1.25" fill="#727272"/><circle cx="3.1" cy="7.7" r="1.25" fill="#727272"/><circle cx="3.1" cy="13.600000000000001" r="1.25" fill="#727272"/><circle cx="9.1" cy="1.8" r="1.25" fill="#727272"/><circle cx="9.1" cy="7.7" r="1.25" fill="#727272"/><circle cx="9.1" cy="13.600000000000001" r="1.25" fill="#727272"/></svg>
<svg style="position:absolute;left:416px;top:340.15px;" width="14.3" height="13.8" viewBox="0 0 14.3 13.8" fill="none"><path d="M3.8 7.2 L6.2 9.6 L10.6 4.6" stroke="#fff" stroke-width="1.6" stroke-linecap="round" stroke-linejoin="round"/></svg>
<svg style="position:absolute;left:346px;top:337.15px;" width="12" height="16" viewBox="0 0 12 16" fill="none"><circle cx="3.1" cy="1.8" r="1.25" fill="#727272"/><circle cx="3.1" cy="7.7" r="1.25" fill="#727272"/><circle cx="3.1" cy="13.600000000000001" r="1.25" fill="#727272"/><circle cx="9.1" cy="1.8" r="1.25" fill="#727272"/><circle cx="9.1" cy="7.7" r="1.25" fill="#727272"/><circle cx="9.1" cy="13.600000000000001" r="1.25" fill="#727272"/></svg>
<svg style="position:absolute;left:416px;top:370.8px;" width="14.3" height="13.8" viewBox="0 0 14.3 13.8" fill="none"><path d="M3.8 7.2 L6.2 9.6 L10.6 4.6" stroke="#fff" stroke-width="1.6" stroke-linecap="round" stroke-linejoin="round"/></svg>
<svg style="position:absolute;left:346px;top:367.8px;" width="12" height="16" viewBox="0 0 12 16" fill="none"><circle cx="3.1" cy="1.8" r="1.25" fill="#727272"/><circle cx="3.1" cy="7.7" r="1.25" fill="#727272"/><circle cx="3.1" cy="13.600000000000001" r="1.25" fill="#727272"/><circle cx="9.1" cy="1.8" r="1.25" fill="#727272"/><circle cx="9.1" cy="7.7" r="1.25" fill="#727272"/><circle cx="9.1" cy="13.600000000000001" r="1.25" fill="#727272"/></svg>
<svg style="position:absolute;left:416px;top:401.45px;" width="14.3" height="13.8" viewBox="0 0 14.3 13.8" fill="none"><path d="M3.8 7.2 L6.2 9.6 L10.6 4.6" stroke="#fff" stroke-width="1.6" stroke-linecap="round" stroke-linejoin="round"/></svg>
<svg style="position:absolute;left:346px;top:398.45px;" width="12" height="16" viewBox="0 0 12 16" fill="none"><circle cx="3.1" cy="1.8" r="1.25" fill="#727272"/><circle cx="3.1" cy="7.7" r="1.25" fill="#727272"/><circle cx="3.1" cy="13.600000000000001" r="1.25" fill="#727272"/><circle cx="9.1" cy="1.8" r="1.25" fill="#727272"/><circle cx="9.1" cy="7.7" r="1.25" fill="#727272"/><circle cx="9.1" cy="13.600000000000001" r="1.25" fill="#727272"/></svg>
<svg style="position:absolute;left:468px;top:169px;" width="20" height="20" viewBox="468 169 20 20" fill="none" stroke-linecap="round" stroke-linejoin="round"><path d="M470.9 185.8 L477.2 180.9" stroke="#A5ADBA" stroke-width="1.3" /><path d="M478.25 173.74 L480.51 176.31 L483.85 175.56 L482.10 178.50 L483.85 181.44 L480.51 180.69 L478.25 183.26 L477.94 179.85 L474.80 178.50 L477.94 177.15 Z" fill="#A5ADBA"/><circle cx="481.4" cy="172.6" r="0.6" fill="#A5ADBA"/><circle cx="475.2" cy="174.7" r="0.6" fill="#A5ADBA"/><circle cx="484.9" cy="177.6" r="0.6" fill="#A5ADBA"/><circle cx="482.4" cy="183.4" r="0.6" fill="#A5ADBA"/></svg>
<svg style="position:absolute;left:628px;top:171px;" width="21" height="17" viewBox="628 171 21 17" fill="none" stroke-linecap="round" stroke-linejoin="round"><path d="M637.4 182.7 H630.3 V173.3 H645.8 V177.6" stroke="#8993A4" stroke-width="1.2" /><rect x="637.4" y="177.6" width="9" height="7.8" fill="#fff"/><path d="M638.6 178.8 L644.8 185 M644.8 178.8 L638.6 185" stroke="#8993A4" stroke-width="1.1" /></svg>
<svg style="position:absolute;left:664px;top:169px;" width="20" height="20" viewBox="664 169 20 20" fill="none" stroke-linecap="round" stroke-linejoin="round"><path d="M676 177.4 L681.5 171.7 M677 171.6 H681.6 V176.4 M672.2 181.2 L666.6 186.4 M666.5 181.6 V186.5 H671.4" stroke="#8993A4" stroke-width="1.1" /></svg>
<svg style="position:absolute;left:692px;top:169px;" width="20" height="20" viewBox="692 169 20 20" fill="none" stroke-linecap="round" stroke-linejoin="round"><path d="M709.6 172 L704 177.2 M695 186.2 L700.2 181" stroke="#8993A4" stroke-width="1.1" /><path d="M703.2 172.8 V177.9 H708.4 Z M695.6 180.4 H700.9 V185.6 Z" fill="#8993A4"/></svg>
<svg style="position:absolute;left:724px;top:174px;" width="12" height="10" viewBox="724 174 12 10" fill="none" stroke-linecap="round" stroke-linejoin="round"><path d="M726.4 177.3 L730 180.9 L733.7 177.3" stroke="#8993A4" stroke-width="1.2" /></svg>
<svg style="position:absolute;left:1239px;top:169px;" width="20" height="20" viewBox="1239 169 20 20" fill="none" stroke-linecap="round" stroke-linejoin="round"><circle cx="1248.1" cy="178" r="5.6" stroke="#344563" stroke-width="1.3"/><path d="M1252.2 182.2 L1255.5 185.6" stroke="#344563" stroke-width="1.3" /></svg>
<svg style="position:absolute;left:1273px;top:170px;" width="19" height="19" viewBox="1273 170 19 19" fill="none" stroke-linecap="round" stroke-linejoin="round"><path d="M1276.6 172.9 H1288 Q1289.4 173.4 1288.4 174.8 L1283.6 180.8 V185.7 L1281 184.2 V180.8 L1276.2 174.8 Q1275.2 173.4 1276.6 172.9 Z" stroke="#344563" stroke-width="1.2" /></svg>
<svg style="position:absolute;left:1308px;top:170px;" width="14" height="18" viewBox="1308 170 14 18" fill="none" stroke-linecap="round" stroke-linejoin="round"><path d="M1310.9 172.4 V185.6 M1315.2 172.4 V185.6 M1319.4 172.4 V185.6" stroke="#344563" stroke-width="1.3" /></svg>
<svg style="position:absolute;left:927px;top:175px;" width="18" height="10" viewBox="927 175 18 10" fill="none" stroke-linecap="round" stroke-linejoin="round"><circle cx="931.7" cy="180" r="1.2" fill="#172B4D"/><circle cx="936" cy="180" r="1.2" fill="#172B4D"/><circle cx="940.3" cy="180" r="1.2" fill="#172B4D"/></svg>
<span style="position:absolute;left:352.36px;top:169px;font:400 14px/20px 'Liberation Sans', sans-serif;color:#172B4D;white-space:pre;letter-spacing:1.093px;">+</span>
<span style="position:absolute;left:366.92px;top:170px;font:400 13px/19px 'Liberation Sans', sans-serif;color:#172B4D;white-space:pre;letter-spacing:0.013px;">Добавить</span>
<span style="position:absolute;left:488.62px;top:170px;font:400 13px/19px 'Liberation Sans', sans-serif;color:#A5ADBA;white-space:pre;letter-spacing:-0.116px;">Показать генераторы</span>
<span style="position:absolute;left:764.14px;top:170px;font:400 7px/11px 'Liberation Sans', sans-serif;color:#A5ADBA;white-space:pre;">0%</span>
<span style="position:absolute;left:796.19px;top:170px;font:400 7px/11px 'Liberation Sans', sans-serif;color:#A5ADBA;white-space:pre;">25%</span>
<span style="position:absolute;left:830.19px;top:170px;font:400 7px/11px 'Liberation Sans', sans-serif;color:#A5ADBA;white-space:pre;">50%</span>
<span style="position:absolute;left:864.19px;top:170px;font:400 7px/11px 'Liberation Sans', sans-serif;color:#A5ADBA;white-space:pre;">75%</span>
<span style="position:absolute;left:896.25px;top:170px;font:400 7px/11px 'Liberation Sans', sans-serif;color:#A5ADBA;white-space:pre;">100%</span>
<span style="position:absolute;left:1326.62px;top:171px;font:400 13px/19px 'Liberation Sans', sans-serif;color:#253858;white-space:pre;letter-spacing:-0.160px;">Вид</span>
<span style="position:absolute;left:366.31px;top:216px;font:700 11.5px/16px 'Liberation Sans', sans-serif;color:#6B778C;white-space:pre;letter-spacing:1.052px;">№</span>
<span style="position:absolute;left:411.01px;top:216px;font:700 11.5px/16px 'Liberation Sans', sans-serif;color:#6B778C;white-space:pre;letter-spacing:0.167px;">Наименование</span>
<span style="position:absolute;left:514.81px;top:216px;font:700 11.5px/16px 'Liberation Sans', sans-serif;color:#6B778C;white-space:pre;">Отклонение длительности</span>
<span style="position:absolute;left:680.31px;top:216px;font:700 11.5px/16px 'Liberation Sans', sans-serif;color:#6B778C;white-space:pre;letter-spacing:0.120px;">Отклонение начала</span>
<span style="position:absolute;left:809.01px;top:216px;font:700 11.5px/16px 'Liberation Sans', sans-serif;color:#6B778C;white-space:pre;letter-spacing:0.168px;">Отклониение окончания</span>
<span style="position:absolute;left:970.21px;top:216px;font:700 11.5px/16px 'Liberation Sans', sans-serif;color:#6B778C;white-space:pre;letter-spacing:-0.009px;">Базовое начало</span>
<span style="position:absolute;left:1082.71px;top:216px;font:700 11.5px/16px 'Liberation Sans', sans-serif;color:#6B778C;white-space:pre;letter-spacing:0.024px;">Базовое окончание</span>
<span style="position:absolute;left:1211.31px;top:216px;font:700 11.5px/16px 'Liberation Sans', sans-serif;color:#6B778C;white-space:pre;letter-spacing:-0.070px;">Базовая длительность</span>
<span style="position:absolute;left:367.22px;top:246px;font:400 13px/19px 'Liberation Sans', sans-serif;color:#172B4D;white-space:pre;">1</span>
<span style="position:absolute;left:435.02px;top:246px;font:400 13px/19px 'Liberation Sans', sans-serif;color:#172B4D;white-space:pre;letter-spacing:-0.155px;">Анализ т…</span>
<span style="position:absolute;left:519.22px;top:246px;font:400 13px/19px 'Liberation Sans', sans-serif;color:#172B4D;white-space:pre;">-</span>
<span style="position:absolute;left:685.22px;top:246px;font:400 13px/19px 'Liberation Sans', sans-serif;color:#172B4D;white-space:pre;">-</span>
<span style="position:absolute;left:814.22px;top:246px;font:400 13px/19px 'Liberation Sans', sans-serif;color:#172B4D;white-space:pre;">-</span>
<span style="position:absolute;left:970.62px;top:246px;font:400 13px/19px 'Liberation Sans', sans-serif;color:#172B4D;white-space:pre;letter-spacing:-0.262px;">02.03.2026 9:00</span>
<span style="position:absolute;left:1082.92px;top:246px;font:400 13px/19px 'Liberation Sans', sans-serif;color:#172B4D;white-space:pre;letter-spacing:-0.185px;">03.03.2026 18:00</span>
<span style="position:absolute;left:1216.12px;top:246px;font:400 13px/19px 'Liberation Sans', sans-serif;color:#172B4D;white-space:pre;">2д</span>
<span style="position:absolute;left:367.22px;top:276px;font:400 13px/19px 'Liberation Sans', sans-serif;color:#172B4D;white-space:pre;">2</span>
<span style="position:absolute;left:435.02px;top:276px;font:400 13px/19px 'Liberation Sans', sans-serif;color:#172B4D;white-space:pre;letter-spacing:0.381px;">Формир…</span>
<span style="position:absolute;left:519.22px;top:276px;font:400 13px/19px 'Liberation Sans', sans-serif;color:#172B4D;white-space:pre;">-8ч</span>
<span style="position:absolute;left:685.22px;top:276px;font:400 13px/19px 'Liberation Sans', sans-serif;color:#172B4D;white-space:pre;">8ч</span>
<span style="position:absolute;left:814.22px;top:276px;font:400 13px/19px 'Liberation Sans', sans-serif;color:#172B4D;white-space:pre;">-</span>
<span style="position:absolute;left:970.62px;top:276px;font:400 13px/19px 'Liberation Sans', sans-serif;color:#172B4D;white-space:pre;letter-spacing:-0.262px;">04.03.2026 9:00</span>
<span style="position:absolute;left:1082.92px;top:276px;font:400 13px/19px 'Liberation Sans', sans-serif;color:#172B4D;white-space:pre;letter-spacing:-0.185px;">09.03.2026 18:00</span>
<span style="position:absolute;left:1216.12px;top:276px;font:400 13px/19px 'Liberation Sans', sans-serif;color:#172B4D;white-space:pre;">4д</span>
<span style="position:absolute;left:367.22px;top:307px;font:400 13px/19px 'Liberation Sans', sans-serif;color:#172B4D;white-space:pre;">3</span>
<span style="position:absolute;left:435.02px;top:307px;font:400 13px/19px 'Liberation Sans', sans-serif;color:#172B4D;white-space:pre;letter-spacing:-0.120px;">Утвержд…</span>
<span style="position:absolute;left:519.22px;top:307px;font:400 13px/19px 'Liberation Sans', sans-serif;color:#172B4D;white-space:pre;">-</span>
<span style="position:absolute;left:685.22px;top:307px;font:400 13px/19px 'Liberation Sans', sans-serif;color:#172B4D;white-space:pre;">-</span>
<span style="position:absolute;left:814.22px;top:307px;font:400 13px/19px 'Liberation Sans', sans-serif;color:#172B4D;white-space:pre;">-</span>
<span style="position:absolute;left:970.62px;top:307px;font:400 13px/19px 'Liberation Sans', sans-serif;color:#172B4D;white-space:pre;letter-spacing:-0.262px;">09.03.2026 9:00</span>
<span style="position:absolute;left:1082.92px;top:307px;font:400 13px/19px 'Liberation Sans', sans-serif;color:#172B4D;white-space:pre;letter-spacing:-0.185px;">09.03.2026 18:00</span>
<span style="position:absolute;left:1216.12px;top:307px;font:400 13px/19px 'Liberation Sans', sans-serif;color:#172B4D;white-space:pre;">8ч</span>
<span style="position:absolute;left:367.22px;top:338px;font:400 13px/19px 'Liberation Sans', sans-serif;color:#172B4D;white-space:pre;">4</span>
<span style="position:absolute;left:435.02px;top:338px;font:400 13px/19px 'Liberation Sans', sans-serif;color:#172B4D;white-space:pre;letter-spacing:-0.220px;">Разрабо…</span>
<span style="position:absolute;left:519.22px;top:338px;font:400 13px/19px 'Liberation Sans', sans-serif;color:#172B4D;white-space:pre;">-</span>
<span style="position:absolute;left:685.22px;top:338px;font:400 13px/19px 'Liberation Sans', sans-serif;color:#172B4D;white-space:pre;">5д</span>
<span style="position:absolute;left:814.22px;top:338px;font:400 13px/19px 'Liberation Sans', sans-serif;color:#172B4D;white-space:pre;">5д</span>
<span style="position:absolute;left:970.62px;top:338px;font:400 13px/19px 'Liberation Sans', sans-serif;color:#172B4D;white-space:pre;letter-spacing:-0.262px;">09.03.2026 9:00</span>
<span style="position:absolute;left:1082.92px;top:338px;font:400 13px/19px 'Liberation Sans', sans-serif;color:#172B4D;white-space:pre;letter-spacing:-0.185px;">13.03.2026 18:00</span>
<span style="position:absolute;left:1216.12px;top:338px;font:400 13px/19px 'Liberation Sans', sans-serif;color:#172B4D;white-space:pre;">5д</span>
<span style="position:absolute;left:367.22px;top:368px;font:400 13px/19px 'Liberation Sans', sans-serif;color:#172B4D;white-space:pre;">5</span>
<span style="position:absolute;left:435.02px;top:368px;font:400 13px/19px 'Liberation Sans', sans-serif;color:#172B4D;white-space:pre;letter-spacing:0.146px;">Проекти…</span>
<span style="position:absolute;left:519.22px;top:368px;font:400 13px/19px 'Liberation Sans', sans-serif;color:#172B4D;white-space:pre;">-</span>
<span style="position:absolute;left:685.22px;top:368px;font:400 13px/19px 'Liberation Sans', sans-serif;color:#172B4D;white-space:pre;">-</span>
<span style="position:absolute;left:814.22px;top:368px;font:400 13px/19px 'Liberation Sans', sans-serif;color:#172B4D;white-space:pre;">-</span>
<span style="position:absolute;left:970.62px;top:368px;font:400 13px/19px 'Liberation Sans', sans-serif;color:#172B4D;white-space:pre;letter-spacing:-0.262px;">16.03.2026 9:00</span>
<span style="position:absolute;left:1082.92px;top:368px;font:400 13px/19px 'Liberation Sans', sans-serif;color:#172B4D;white-space:pre;letter-spacing:-0.185px;">27.03.2026 18:00</span>
<span style="position:absolute;left:1216.12px;top:368px;font:400 13px/19px 'Liberation Sans', sans-serif;color:#172B4D;white-space:pre;">10д</span>
<span style="position:absolute;left:367.22px;top:399px;font:400 13px/19px 'Liberation Sans', sans-serif;color:#172B4D;white-space:pre;">6</span>
<span style="position:absolute;left:435.02px;top:399px;font:400 13px/19px 'Liberation Sans', sans-serif;color:#172B4D;white-space:pre;letter-spacing:-0.220px;">Разрабо…</span>
<span style="position:absolute;left:519.22px;top:399px;font:400 13px/19px 'Liberation Sans', sans-serif;color:#172B4D;white-space:pre;">-</span>
<span style="position:absolute;left:685.22px;top:399px;font:400 13px/19px 'Liberation Sans', sans-serif;color:#172B4D;white-space:pre;">-</span>
<span style="position:absolute;left:814.22px;top:399px;font:400 13px/19px 'Liberation Sans', sans-serif;color:#172B4D;white-space:pre;">-</span>
<span style="position:absolute;left:970.62px;top:399px;font:400 13px/19px 'Liberation Sans', sans-serif;color:#172B4D;white-space:pre;letter-spacing:-0.262px;">23.03.2026 9:00</span>
<span style="position:absolute;left:1082.92px;top:399px;font:400 13px/19px 'Liberation Sans', sans-serif;color:#172B4D;white-space:pre;letter-spacing:-0.185px;">01.04.2026 18:00</span>
<span style="position:absolute;left:1216.12px;top:399px;font:400 13px/19px 'Liberation Sans', sans-serif;color:#172B4D;white-space:pre;">8д</span>
</section>
<section aria-label="Диаграмма Ганта">
<div style="position:absolute;left:1368.4px;top:152px;width:5.4px;height:627px;background:#DEE0E7;"></div>
<div style="position:absolute;left:1383px;top:159.2px;width:28.9px;height:28.4px;background:#F4F5F7;border-radius:4px"></div>
<div style="position:absolute;left:1416.2px;top:159.2px;width:65.5px;height:28.4px;background:#F4F5F7;border-radius:4px"></div>
<div style="position:absolute;left:1491.1px;top:159.2px;width:28.6px;height:28.4px;background:#F4F5F7;border-radius:4px"></div>
<div style="position:absolute;left:1521px;top:159.2px;width:28.7px;height:28.4px;background:#F4F5F7;border-radius:4px"></div>
<div style="position:absolute;left:1551px;top:159.2px;width:28.7px;height:28.4px;background:#F4F5F7;border-radius:4px"></div>
<div style="position:absolute;left:1589.2px;top:159.2px;width:27.7px;height:28.4px;background:#F4F5F7;border-radius:4px"></div>
<div style="position:absolute;left:1618px;top:159.2px;width:28.7px;height:28.4px;background:#F4F5F7;border-radius:4px"></div>
<div style="position:absolute;left:1656px;top:159.2px;width:29px;height:28.4px;background:#F4F5F7;border-radius:4px"></div>
<div style="position:absolute;left:1689.8px;top:159.2px;width:138.4px;height:28.4px;background:#F4F5F7;border-radius:4px"></div>
<div style="position:absolute;left:1374px;top:196px;width:463px;height:1px;background:#F0F0F0;"></div>
<div style="position:absolute;left:1374px;top:215.3px;width:436px;height:1px;background:#F1F1F1;"></div>
<div style="position:absolute;left:1374px;top:235.9px;width:463px;height:1px;background:#EAEAEA;"></div>
<div style="position:absolute;left:1384.3px;top:216px;width:1px;height:20px;background:#F1F1F1;"></div>
<div style="position:absolute;left:1402.4px;top:216px;width:1px;height:20px;background:#F1F1F1;"></div>
<div style="position:absolute;left:1420.4px;top:216px;width:1px;height:20px;background:#F1F1F1;"></div>
<div style="position:absolute;left:1438.5px;top:216px;width:1px;height:20px;background:#F1F1F1;"></div>
<div style="position:absolute;left:1456.5px;top:216px;width:1px;height:20px;background:#F1F1F1;"></div>
<div style="position:absolute;left:1474.1px;top:197px;width:1px;height:223.5px;background:#F0F0F0;"></div>
<div style="position:absolute;left:1492.7px;top:216px;width:1px;height:20px;background:#F1F1F1;"></div>
<div style="position:absolute;left:1510.7px;top:216px;width:1px;height:20px;background:#F1F1F1;"></div>
<div style="position:absolute;left:1528.8px;top:216px;width:1px;height:20px;background:#F1F1F1;"></div>
<div style="position:absolute;left:1546.8px;top:216px;width:1px;height:20px;background:#F1F1F1;"></div>
<div style="position:absolute;left:1564.9px;top:216px;width:1px;height:20px;background:#F1F1F1;"></div>
<div style="position:absolute;left:1582.9px;top:216px;width:1px;height:20px;background:#F1F1F1;"></div>
<div style="position:absolute;left:1600.5px;top:197px;width:1px;height:223.5px;background:#F0F0F0;"></div>
<div style="position:absolute;left:1619.1px;top:216px;width:1px;height:20px;background:#F1F1F1;"></div>
<div style="position:absolute;left:1637.1px;top:216px;width:1px;height:20px;background:#F1F1F1;"></div>
<div style="position:absolute;left:1655.2px;top:216px;width:1px;height:20px;background:#F1F1F1;"></div>
<div style="position:absolute;left:1673.2px;top:216px;width:1px;height:20px;background:#F1F1F1;"></div>
<div style="position:absolute;left:1691.3px;top:216px;width:1px;height:20px;background:#F1F1F1;"></div>
<div style="position:absolute;left:1709.3px;top:216px;width:1px;height:20px;background:#F1F1F1;"></div>
<div style="position:absolute;left:1726.9px;top:197px;width:1px;height:223.5px;background:#F0F0F0;"></div>
<div style="position:absolute;left:1745.5px;top:216px;width:1px;height:20px;background:#F1F1F1;"></div>
<div style="position:absolute;left:1763.5px;top:216px;width:1px;height:20px;background:#F1F1F1;"></div>
<div style="position:absolute;left:1781.6px;top:216px;width:1px;height:20px;background:#F1F1F1;"></div>
<div style="position:absolute;left:1799.6px;top:216px;width:1px;height:20px;background:#F1F1F1;"></div>
<div style="position:absolute;left:1374px;top:266.9px;width:463px;height:1px;background:#F1F1F1;"></div>
<div style="position:absolute;left:1374px;top:297.6px;width:463px;height:1px;background:#F1F1F1;"></div>
<div style="position:absolute;left:1374px;top:328.2px;width:463px;height:1px;background:#F1F1F1;"></div>
<div style="position:absolute;left:1374px;top:358.9px;width:463px;height:1px;background:#F1F1F1;"></div>
<div style="position:absolute;left:1374px;top:389.6px;width:463px;height:1px;background:#F1F1F1;"></div>
<div style="position:absolute;left:1810.6px;top:197px;width:26.4px;height:39px;background:#fff;z-index:2"></div>
<div style="position:absolute;left:1810px;top:197px;width:1px;height:39px;background:#F1F1F1;z-index:2"></div>
<div style="position:absolute;left:1368.4px;top:152px;width:5.4px;height:627px;background:#DEE0E7;z-index:3"></div>
<div style="position:absolute;left:1300px;top:196px;width:68.4px;height:20px;background:#fff;z-index:2"></div>
<div style="position:absolute;left:1411.2px;top:237.8px;width:1.4px;height:182.7px;background:#66BB6A;"></div>
<div style="position:absolute;left:1483.2px;top:246.2px;width:28.8px;height:11.8px;background:#62AEBB;border-radius:1.5px"></div>
<div style="position:absolute;left:1483.2px;top:260px;width:28.5px;height:6px;background:#CFCFCF;border:1px solid #A0A0A0;box-sizing:border-box;border-radius:1px"></div>
<div style="position:absolute;left:1537.5px;top:276.85px;width:83px;height:11.8px;background:#62AEBB;border-radius:1.5px"></div>
<div style="position:absolute;left:1519.2px;top:290.65px;width:100.8px;height:6px;background:#CFCFCF;border:1px solid #A0A0A0;box-sizing:border-box;border-radius:1px"></div>
<div style="position:absolute;left:1609.5px;top:307.5px;width:11px;height:11.8px;background:#62AEBB;border-radius:1.5px"></div>
<div style="position:absolute;left:1609.5px;top:321.3px;width:10.5px;height:6px;background:#CFCFCF;border:1px solid #A0A0A0;box-sizing:border-box;border-radius:1px"></div>
<div style="position:absolute;left:1736px;top:338.15px;width:82.7px;height:11.8px;background:#62AEBB;border-radius:1.5px"></div>
<div style="position:absolute;left:1609.5px;top:351.95px;width:82.5px;height:6px;background:#CFCFCF;border:1px solid #A0A0A0;box-sizing:border-box;border-radius:1px"></div>
<svg style="position:absolute;left:1804px;top:167px;" width="12" height="12" viewBox="0 0 12 12" fill="none"><path d="M2 4 L6 8 L10 4" stroke="#172B4D" stroke-width="1.4" stroke-linecap="round" stroke-linejoin="round"/></svg>
<svg style="position:absolute;left:1387px;top:162px;" width="21" height="20" viewBox="1387 162 21 20" fill="none" stroke-linecap="round" stroke-linejoin="round"><circle cx="1394.3" cy="169.9" r="2.2" stroke="#344563" stroke-width="1.1"/><circle cx="1400.7" cy="167.5" r="2.3" stroke="#344563" stroke-width="1.1"/><path d="M1390.1 178.8 A4.3 4.3 0 0 1 1398.7 178.8 M1397.4 172.8 A4.3 4.3 0 0 1 1404.4 176.4" stroke="#344563" stroke-width="1.1" /></svg>
<svg style="position:absolute;left:1495.9px;top:162px;" width="20.0" height="20" viewBox="1495.9 162 20.0 20" fill="none" stroke-linecap="round" stroke-linejoin="round"><circle cx="1504.9" cy="171.4" r="5.5" stroke="#344563" stroke-width="1.3"/><path d="M1508.9 175.5 L1512.6000000000001 178.3" stroke="#344563" stroke-width="1.3" /><path d="M1503.3000000000002 171.2 H1506.5 M1504.9 169.6 V172.8" stroke="#344563" stroke-width="1.4" /></svg>
<svg style="position:absolute;left:1525.9px;top:162px;" width="20.0" height="20" viewBox="1525.9 162 20.0 20" fill="none" stroke-linecap="round" stroke-linejoin="round"><circle cx="1534.9" cy="171.4" r="5.5" stroke="#344563" stroke-width="1.3"/><path d="M1538.9 175.5 L1542.6000000000001 178.3" stroke="#344563" stroke-width="1.3" /><path d="M1533.3000000000002 171.2 H1536.5" stroke="#344563" stroke-width="1.4" /></svg>
<svg style="position:absolute;left:1593px;top:162px;" width="20" height="20" viewBox="1593 162 20 20" fill="none" stroke-linecap="round" stroke-linejoin="round"><g transform="translate(1595.8 164.70000000000002) scale(0.6)" stroke="#A5ADBA" stroke-width="1.9" fill="none"><path d="M10 13a5 5 0 0 0 7.54.54l3-3a5 5 0 0 0-7.07-7.07l-1.72 1.71"/><path d="M14 11a5 5 0 0 0-7.54-.54l-3 3a5 5 0 0 0 7.07 7.07l1.71-1.71"/></g></svg>
<svg style="position:absolute;left:1623px;top:162px;" width="20" height="20" viewBox="1623 162 20 20" fill="none" stroke-linecap="round" stroke-linejoin="round"><g transform="translate(1625.6 164.70000000000002) scale(0.6)" stroke="#A5ADBA" stroke-width="1.9" fill="none"><path d="M10 13a5 5 0 0 0 7.54.54l3-3a5 5 0 0 0-7.07-7.07l-1.72 1.71"/><path d="M14 11a5 5 0 0 0-7.54-.54l-3 3a5 5 0 0 0 7.07 7.07l1.71-1.71"/></g><path d="M1626.4 165.2 L1639.6 178.8" stroke="#A5ADBA" stroke-width="1" /></svg>
<svg style="position:absolute;left:1662px;top:163px;" width="18" height="18" viewBox="1662 163 18 18" fill="none" stroke-linecap="round" stroke-linejoin="round"><path d="M1671.1 166.6 L1676.7 172.2 L1671.1 177.8 L1665.5 172.2 Z" stroke="#344563" stroke-width="1.2" /></svg>
<svg style="position:absolute;left:1698px;top:162px;" width="21" height="22" viewBox="1698 162 21 22" fill="none" stroke-linecap="round" stroke-linejoin="round"><path d="M1708.5 164.9 L1716.3 169 L1708.5 173.1 L1700.7 169 Z M1700.7 173 L1708.5 177.1 L1716.3 173 M1700.7 177 L1708.5 181.1 L1716.3 177" stroke="#344563" stroke-width="1.3" /></svg>
<svg style="position:absolute;left:1816px;top:208px;z-index:3;" width="18" height="15" viewBox="1816 208 18 15" fill="none" stroke-linecap="round" stroke-linejoin="round"><path d="M1821.8 210.9 H1831.8 M1821.8 215.5 H1831.8 M1821.8 220.1 H1831.8" stroke="#6B7A99" stroke-width="1.3" style="z-index:3"/><circle cx="1818.7" cy="210.9" r="0.9" fill="#2D3E6B"/><circle cx="1818.7" cy="215.5" r="0.9" fill="#2D3E6B"/><circle cx="1818.7" cy="220.1" r="0.9" fill="#2D3E6B"/></svg>
<svg style="position:absolute;left:1558px;top:168px;" width="18" height="10" viewBox="1558 168 18 10" fill="none" stroke-linecap="round" stroke-linejoin="round"><circle cx="1562.7" cy="173.1" r="1.25" fill="#172B4D"/><circle cx="1567.3" cy="173.1" r="1.25" fill="#172B4D"/><circle cx="1571.8" cy="173.1" r="1.25" fill="#172B4D"/></svg>
<span style="position:absolute;left:1424.22px;top:165px;font:400 13px/19px 'Liberation Sans', sans-serif;color:#42526E;white-space:pre;letter-spacing:0.005px;">Сегодня</span>
<span style="position:absolute;left:1722.92px;top:163px;font:400 13px/19px 'Liberation Sans', sans-serif;color:#42526E;white-space:pre;letter-spacing:-0.045px;">Базовый</span>
<span style="position:absolute;left:1722.92px;top:179px;font:400 13px/19px 'Liberation Sans', sans-serif;color:#42526E;white-space:pre;letter-spacing:0.053px;">план</span>
<span style="position:absolute;left:1369.78px;top:219px;font:400 11px/16px 'Liberation Sans', sans-serif;color:#A3A3A3;white-space:pre;z-index:1;">Вт</span>
<span style="position:absolute;left:1386.81px;top:219px;font:400 11px/16px 'Liberation Sans', sans-serif;color:#A3A3A3;white-space:pre;z-index:1;">Ср</span>
<span style="position:absolute;left:1405.71px;top:219px;font:400 11px/16px 'Liberation Sans', sans-serif;color:#A3A3A3;white-space:pre;z-index:1;">Чт</span>
<span style="position:absolute;left:1423.48px;top:219px;font:400 11px/16px 'Liberation Sans', sans-serif;color:#A3A3A3;white-space:pre;z-index:1;">Пт</span>
<span style="position:absolute;left:1440.89px;top:219px;font:400 11px/16px 'Liberation Sans', sans-serif;color:#A3A3A3;white-space:pre;z-index:1;">Сб</span>
<span style="position:absolute;left:1459.65px;top:219px;font:400 11px/16px 'Liberation Sans', sans-serif;color:#A3A3A3;white-space:pre;z-index:1;">Вс</span>
<span style="position:absolute;left:1477.14px;top:219px;font:400 11px/16px 'Liberation Sans', sans-serif;color:#A3A3A3;white-space:pre;z-index:1;">Пн</span>
<span style="position:absolute;left:1496.18px;top:219px;font:400 11px/16px 'Liberation Sans', sans-serif;color:#A3A3A3;white-space:pre;z-index:1;">Вт</span>
<span style="position:absolute;left:1513.21px;top:219px;font:400 11px/16px 'Liberation Sans', sans-serif;color:#A3A3A3;white-space:pre;z-index:1;">Ср</span>
<span style="position:absolute;left:1532.11px;top:219px;font:400 11px/16px 'Liberation Sans', sans-serif;color:#A3A3A3;white-space:pre;z-index:1;">Чт</span>
<span style="position:absolute;left:1549.88px;top:219px;font:400 11px/16px 'Liberation Sans', sans-serif;color:#A3A3A3;white-space:pre;z-index:1;">Пт</span>
<span style="position:absolute;left:1567.29px;top:219px;font:400 11px/16px 'Liberation Sans', sans-serif;color:#A3A3A3;white-space:pre;z-index:1;">Сб</span>
<span style="position:absolute;left:1586.05px;top:219px;font:400 11px/16px 'Liberation Sans', sans-serif;color:#A3A3A3;white-space:pre;z-index:1;">Вс</span>
<span style="position:absolute;left:1603.53px;top:219px;font:400 11px/16px 'Liberation Sans', sans-serif;color:#A3A3A3;white-space:pre;z-index:1;">Пн</span>
<span style="position:absolute;left:1622.58px;top:219px;font:400 11px/16px 'Liberation Sans', sans-serif;color:#A3A3A3;white-space:pre;z-index:1;">Вт</span>
<span style="position:absolute;left:1639.61px;top:219px;font:400 11px/16px 'Liberation Sans', sans-serif;color:#A3A3A3;white-space:pre;z-index:1;">Ср</span>
<span style="position:absolute;left:1658.51px;top:219px;font:400 11px/16px 'Liberation Sans', sans-serif;color:#A3A3A3;white-space:pre;z-index:1;">Чт</span>
<span style="position:absolute;left:1676.28px;top:219px;font:400 11px/16px 'Liberation Sans', sans-serif;color:#A3A3A3;white-space:pre;z-index:1;">Пт</span>
<span style="position:absolute;left:1693.69px;top:219px;font:400 11px/16px 'Liberation Sans', sans-serif;color:#A3A3A3;white-space:pre;z-index:1;">Сб</span>
<span style="position:absolute;left:1712.45px;top:219px;font:400 11px/16px 'Liberation Sans', sans-serif;color:#A3A3A3;white-space:pre;z-index:1;">Вс</span>
<span style="position:absolute;left:1729.93px;top:219px;font:400 11px/16px 'Liberation Sans', sans-serif;color:#A3A3A3;white-space:pre;z-index:1;">Пн</span>
<span style="position:absolute;left:1748.97px;top:219px;font:400 11px/16px 'Liberation Sans', sans-serif;color:#A3A3A3;white-space:pre;z-index:1;">Вт</span>
<span style="position:absolute;left:1766.01px;top:219px;font:400 11px/16px 'Liberation Sans', sans-serif;color:#A3A3A3;white-space:pre;z-index:1;">Ср</span>
<span style="position:absolute;left:1784.91px;top:219px;font:400 11px/16px 'Liberation Sans', sans-serif;color:#A3A3A3;white-space:pre;z-index:1;">Чт</span>
<span style="position:absolute;left:1802.68px;top:219px;font:400 11px/16px 'Liberation Sans', sans-serif;color:#A3A3A3;white-space:pre;z-index:1;">Пт</span>
<span style="position:absolute;left:1371.88px;top:199px;font:700 11px/16px 'Liberation Sans', sans-serif;color:#8C8C8C;white-space:pre;z-index:1;">23 - 1 Февраль</span>
<span style="position:absolute;left:1512.07px;top:199px;font:700 11px/16px 'Liberation Sans', sans-serif;color:#8C8C8C;white-space:pre;z-index:1;">2 - 8 Март</span>
<span style="position:absolute;left:1635.42px;top:199px;font:700 11px/16px 'Liberation Sans', sans-serif;color:#8C8C8C;white-space:pre;z-index:1;">9 - 15 Март</span>
<span style="position:absolute;left:1758.75px;top:199px;font:700 11px/16px 'Liberation Sans', sans-serif;color:#8C8C8C;white-space:pre;z-index:1;">16 - 22 Март</span>
</section>
<div aria-label="Полосы прокрутки">
<div style="position:absolute;left:340px;top:764.3px;width:1028.4px;height:14.6px;background:#FAFAFA;"></div>
<div style="position:absolute;left:1374px;top:764.3px;width:477px;height:14.6px;background:#FAFAFA;"></div>
<div style="position:absolute;left:1837px;top:152px;width:14px;height:612.3px;background:#FAFAFA;"></div>
<div style="position:absolute;left:357.9px;top:767px;width:979.3px;height:8.7px;background:#8B8B8B;border-radius:4.4px"></div>
<div style="position:absolute;left:1410.3px;top:767px;width:34.2px;height:8.7px;background:#8B8B8B;border-radius:4.4px"></div>
<svg style="position:absolute;left:344.9px;top:766.7px;" width="5.4" height="9.3" viewBox="0 0 5.4 9.3" fill="none"><polygon points="5.4,0 5.4,9.3 0,4.65" fill="#8B8B8B"/></svg>
<svg style="position:absolute;left:1356.8px;top:766.7px;" width="5.4" height="9.3" viewBox="0 0 5.4 9.3" fill="none"><polygon points="0,0 0,9.3 5.4,4.65" fill="#8B8B8B"/></svg>
<svg style="position:absolute;left:1378.9px;top:766.7px;" width="5.4" height="9.3" viewBox="0 0 5.4 9.3" fill="none"><polygon points="5.4,0 5.4,9.3 0,4.65" fill="#8B8B8B"/></svg>
<svg style="position:absolute;left:1826px;top:766.7px;" width="5.4" height="9.3" viewBox="0 0 5.4 9.3" fill="none"><polygon points="0,0 0,9.3 5.4,4.65" fill="#8B8B8B"/></svg>
<svg style="position:absolute;left:1840px;top:158px;" width="9.3" height="5" viewBox="0 0 9.3 5" fill="none"><polygon points="0,5 9.3,5 4.65,0" fill="#8B8B8B"/></svg>
<svg style="position:absolute;left:1840px;top:752px;" width="9.3" height="5" viewBox="0 0 9.3 5" fill="none"><polygon points="0,0 9.3,0 4.65,5" fill="#8B8B8B"/></svg>
</div>
</body></html>
